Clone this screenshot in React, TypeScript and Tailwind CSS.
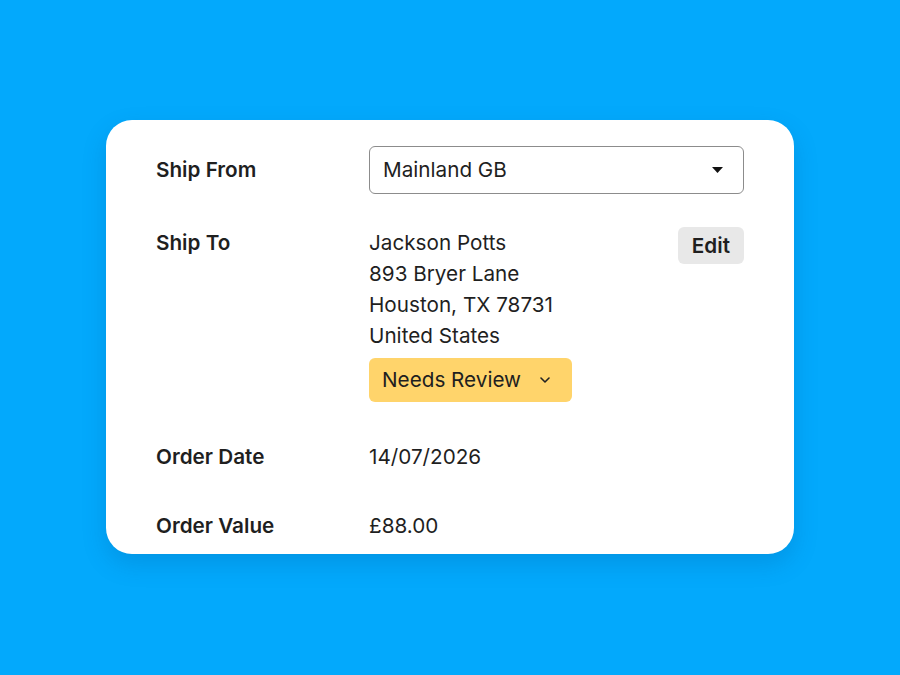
import React from "react";

export default function App() {
  return (
    <div
      className="w-[900px] h-[675px] bg-[#03a9fc] flex items-center justify-center"
      style={{ fontFamily: "Inter, 'Noto Sans', sans-serif" }}
    >
      <div className="w-[688px] h-[434px] -mt-[1px] bg-white rounded-[26px] shadow-[0_10px_24px_rgba(0,60,120,0.18)] pl-[50px] pr-[50px] pt-[26px] text-[20.7px] text-[#1f1f1f]">
        {/* Ship From */}
        <div className="flex items-center h-[48px]">
          <div className="w-[213px] font-semibold">Ship From</div>
          <div className="flex-1 h-[48px] border border-[#8c8c8c] rounded-[6px] flex items-center pl-[13px] pr-[20px] justify-between">
            <span>Mainland GB</span>
            <svg width="11" height="6" viewBox="0 0 11 6">
              <path d="M0 0 L11 0 L5.5 6 Z" fill="#111" />
            </svg>
          </div>
        </div>

        {/* Ship To */}
        <div className="flex mt-[33px]">
          <div className="w-[213px] font-semibold leading-[31px]">Ship To</div>
          <div className="flex-1 flex justify-between">
            <div>
              <div className="leading-[31px]">Jackson Potts</div>
              <div className="leading-[31px]">893 Bryer Lane</div>
              <div className="leading-[31px]">Houston, TX 78731</div>
              <div className="leading-[31px]">United States</div>
              <div className="mt-[7px] w-[203px] h-[44px] bg-[#ffd46b] rounded-[6px] flex items-center pl-[13px]">
                <span>Needs Review</span>
                <svg className="ml-[19px]" width="10" height="6" viewBox="0 0 10 6">
                  <path d="M1 1 L5 5 L9 1" fill="none" stroke="#222" strokeWidth="1.6" strokeLinecap="round" strokeLinejoin="round" />
                </svg>
              </div>
            </div>
            <div className="h-[37px] px-[14px] bg-[#e8e8e8] rounded-[6px] flex items-center font-semibold">
              Edit
            </div>
          </div>
        </div>

        {/* Order Date */}
        <div className="flex mt-[39px] leading-[31px]">
          <div className="w-[213px] font-semibold">Order Date</div>
          <div>14/07/2026</div>
        </div>

        {/* Order Value */}
        <div className="flex mt-[38px] leading-[31px]">
          <div className="w-[213px] font-semibold">Order Value</div>
          <div>£88.00</div>
        </div>
      </div>
    </div>
  );
}
